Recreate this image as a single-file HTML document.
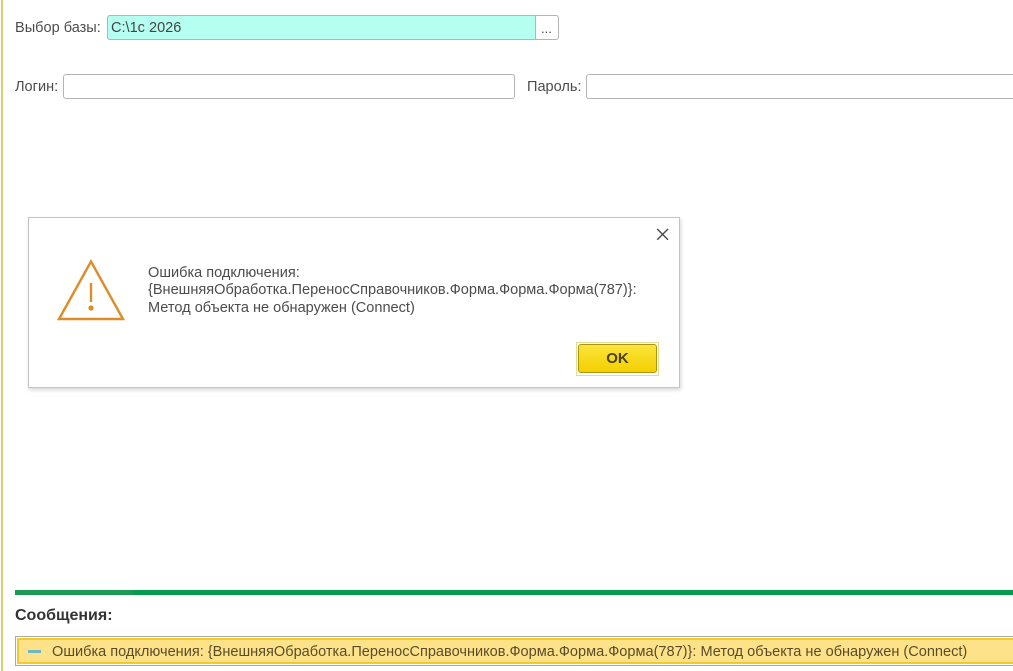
<!DOCTYPE html>
<html><head><meta charset="utf-8">
<style>
html,body{margin:0;padding:0;background:#fff}
body{position:relative;width:1013px;height:671px;overflow:hidden;font-family:"Liberation Sans",sans-serif;font-size:14.55px;color:#4c4c4c}
#w{position:absolute;left:0;top:0;width:1013px;height:671px;filter:blur(.3px)}
.a{position:absolute;white-space:nowrap;line-height:16px}
.b{position:absolute;box-sizing:border-box;border:1px solid #b4b4b4;border-radius:3px;background:#fff}
</style></head><body><div id="w">
<div class="a" style="left:1px;top:0;width:2px;height:671px;background:#dfce6c"></div>
<div class="a" style="left:15px;top:20px">Выбор базы:</div>
<div class="b" style="left:107px;top:15px;width:452px;height:25px"></div>
<div class="b" style="left:107px;top:15px;width:429px;height:25px;background:#b4fff0;border-radius:3px 0 0 3px"></div>
<div class="a" style="left:111px;top:20px;color:#444">C:\1c 2026</div>
<div class="a" style="left:541px;top:21px;font-size:13px;color:#444">...</div>
<div class="a" style="left:15px;top:79px">Логин:</div>
<div class="b" style="left:63px;top:74px;width:452px;height:25px"></div>
<div class="a" style="left:527px;top:79px">Пароль:</div>
<div class="b" style="left:586px;top:74px;width:440px;height:25px"></div>

<div class="a" style="left:28px;top:217px;width:652px;height:171px;box-sizing:border-box;background:#fff;border:1px solid #c4c4c4;box-shadow:1px 2px 4px rgba(0,0,0,.16)"></div>
<svg class="a" style="left:56px;top:258px" width="70" height="64" viewBox="0 0 70 64" fill="none">
<path d="M35 3.5 L67 61 L3 61 Z" stroke="#dd8c26" stroke-width="2.4"/>
<path d="M35 25 V44" stroke="#dd8c26" stroke-width="2.4"/>
<circle cx="35" cy="50" r="2.6" fill="#dd8c26"/>
</svg>
<svg class="a" style="left:656px;top:228px" width="13" height="13" viewBox="0 0 13 13" fill="none">
<path d="M1.2 1 L12 11.8 M12 1 L1.2 11.8" stroke="#4a4a4a" stroke-width="1.4"/>
</svg>
<div class="a" style="left:148px;top:265px">Ошибка подключения:</div>
<div class="a" style="left:148px;top:282px">{ВнешняяОбработка.ПереносСправочников.Форма.Форма.Форма(787)}:</div>
<div class="a" style="left:148px;top:300px">Метод объекта не обнаружен (Connect)</div>
<div class="a" style="left:576px;top:342px;width:83px;height:34px;box-sizing:border-box;border:1px solid #e6dc8c;background:#fff"></div>
<div class="a" style="left:578px;top:344px;width:79px;height:29px;box-sizing:border-box;border:1px solid #a9941a;border-radius:3px;background:linear-gradient(#fbe43a,#f4cf00);color:#4a4214;font-weight:bold;font-size:15px;line-height:27px;text-align:center">OK</div>

<div class="a" style="left:15px;top:590px;width:998px;height:5px;background:#049b4b"></div>
<div class="a" style="left:15px;top:590px;width:118px;height:5px;background:#1a9a55"></div>
<div class="a" style="left:15px;top:608px;font-weight:bold;font-size:16px;color:#333">Сообщения:</div>
<div class="a" style="left:15px;top:636px;width:1000px;height:30px;box-sizing:border-box;border:1px solid #aaa;background:#fff"></div>
<div class="a" style="left:17px;top:638px;width:998px;height:26px;box-sizing:border-box;border:2px solid #f6ca24;background:#fee28a"></div>
<div class="a" style="left:28px;top:650px;width:13px;height:3px;background:#6fb8bd"></div>
<div class="a" style="left:52px;top:644px;color:#5a4c28">Ошибка подключения: {ВнешняяОбработка.ПереносСправочников.Форма.Форма.Форма(787)}: Метод объекта не обнаружен (Connect)</div>
</div></body></html>
